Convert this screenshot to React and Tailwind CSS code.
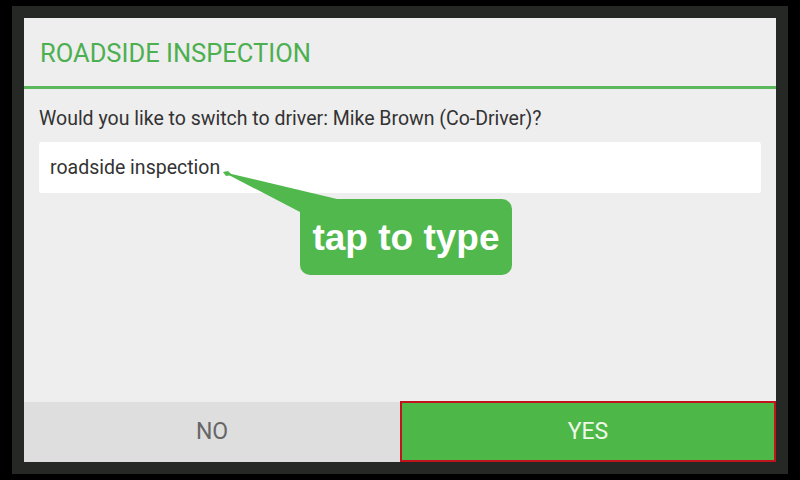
import React from "react";

const TapCallout = () => (
  <div className="absolute left-[198px] top-[152px] w-[292px] h-[106px] pointer-events-none">
    <svg width="292" height="106" className="absolute left-0 top-0">
      <polygon points="1,2 115,29 78,42" fill="#50b84c" />
      <polygon points="1,2 6,1 10,5 4,6" fill="#50b84c" />
    </svg>
    <div className="absolute left-[78px] top-[29px] w-[212px] h-[76px] rounded-[10px] bg-[#50b84c] flex items-center justify-center">
      <span className="text-white font-bold text-[37px] leading-none font-['Liberation_Sans',Arial,sans-serif]">
        tap to type
      </span>
    </div>
  </div>
);

const App = () => {
  return (
    <div className="w-[800px] h-[480px] bg-black pt-[6px] pl-[12px] font-['Roboto',sans-serif]">
      <div className="w-[776px] h-[468px] bg-[#262826] p-[12px]">
        <div className="relative w-[752px] h-[444px] bg-[#eeeeee] flex flex-col">
          {/* Header */}
          <div className="h-[68px] flex items-center px-[16px] pt-[3px]">
            <span className="text-[25.5px] text-[#4caf50] leading-none">ROADSIDE INSPECTION</span>
          </div>
          <div className="h-[3px] bg-[#5cb85c]" />

          {/* Body */}
          <div className="flex-1 px-[15px] pt-[18px]">
            <p className="text-[19.5px] text-[#333333] leading-[24px]">
              Would you like to switch to driver: Mike Brown (Co-Driver)?
            </p>
            <div className="mt-[11px] h-[51px] bg-white rounded-[3px] flex items-center px-[11px] pt-[1px]">
              <span className="text-[19.5px] text-[#333333]">roadside inspection</span>
            </div>
          </div>

          {/* Buttons */}
          <div className="h-[60px] flex">
            <button className="flex-1 bg-[#dedede] text-[#666666] text-[23px] flex items-center justify-center pt-[1px]">
              NO
            </button>
            <button className="w-[376px] -mt-[1px] h-[61px] bg-[#4db848] border-[2px] border-[#c0141c] text-[#eef8ea] text-[23px] flex items-center justify-center pt-[1px]">
              YES
            </button>
          </div>

          <TapCallout />
        </div>
      </div>
    </div>
  );
};

export default App;
